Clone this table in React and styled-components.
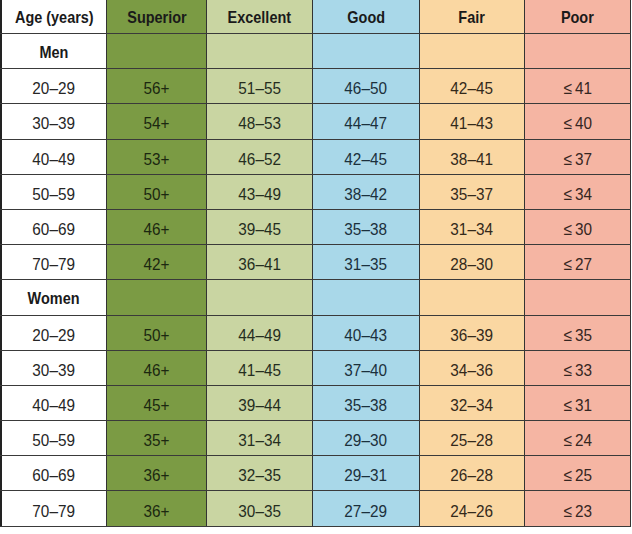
import React from "react";
import styled, { createGlobalStyle } from "styled-components";

const Global = createGlobalStyle`
  html, body { margin: 0; padding: 0; background: #ffffff; }
  body { font-family: "Liberation Sans", Arial, sans-serif; }
`;

const COLORS = ["#ffffff", "#7b9b44", "#c9d5a2", "#a9d8e9", "#fad7a2", "#f5b5a3"];
const TEXT = ["#262626", "#1b2810", "#252d1e", "#1b303c", "#33291a", "#352622"];

const Table = styled.div`
  width: 631px;
  display: flex;
  flex-direction: column;
  box-shadow: 0 3px 0 -1px #e4e4e4;
`;

const Row = styled.div`
  display: grid;
  grid-template-columns: 107px 100px 106px 107px 105px 106px;
  height: ${(p) => (p.$header ? "34px" : "35.2px")};
  box-sizing: border-box;
  border-bottom: 1px solid #3a3a3a;
`;

const Cell = styled.div`
  box-sizing: border-box;
  display: flex;
  align-items: center;
  justify-content: center;
  background: ${(p) => COLORS[p.$col]};
  color: ${(p) => (p.$bold ? "#1a1a1a" : TEXT[p.$col])};
  border-right: 1px solid #333333;
  border-left: ${(p) => (p.$col === 0 ? "2px solid #222222" : "none")};
  padding-top: ${(p) => (p.$header ? "1px" : p.$bold ? "2px" : "5px")};
  white-space: nowrap;
`;

const Label = styled.span`
  display: inline-block;
  font-size: 17px;
  font-weight: ${(p) => (p.$bold ? 700 : 400)};
  transform: scaleX(${(p) => (p.$bold ? 0.85 : 0.9)});
  line-height: 1;
`;

const headers = ["Age (years)", "Superior", "Excellent", "Good", "Fair", "Poor"];

const men = [
  ["20–29", "56+", "51–55", "46–50", "42–45", "≤\u200941"],
  ["30–39", "54+", "48–53", "44–47", "41–43", "≤\u200940"],
  ["40–49", "53+", "46–52", "42–45", "38–41", "≤\u200937"],
  ["50–59", "50+", "43–49", "38–42", "35–37", "≤\u200934"],
  ["60–69", "46+", "39–45", "35–38", "31–34", "≤\u200930"],
  ["70–79", "42+", "36–41", "31–35", "28–30", "≤\u200927"],
];

const women = [
  ["20–29", "50+", "44–49", "40–43", "36–39", "≤\u200935"],
  ["30–39", "46+", "41–45", "37–40", "34–36", "≤\u200933"],
  ["40–49", "45+", "39–44", "35–38", "32–34", "≤\u200931"],
  ["50–59", "35+", "31–34", "29–30", "25–28", "≤\u200924"],
  ["60–69", "36+", "32–35", "29–31", "26–28", "≤\u200925"],
  ["70–79", "36+", "30–35", "27–29", "24–26", "≤\u200923"],
];

function GroupRow({ label }) {
  return (
    <Row>
      {COLORS.map((_, i) => (
        <Cell key={i} $col={i} $bold>
          {i === 0 ? <Label $bold>{label}</Label> : null}
        </Cell>
      ))}
    </Row>
  );
}

function DataRow({ values }) {
  return (
    <Row>
      {values.map((v, i) => (
        <Cell key={i} $col={i}>
          <Label>{v}</Label>
        </Cell>
      ))}
    </Row>
  );
}

export default function App() {
  return (
    <>
      <Global />
      <Table>
        <Row $header>
          {headers.map((h, i) => (
            <Cell key={i} $col={i} $bold $header>
              <Label $bold>{h}</Label>
            </Cell>
          ))}
        </Row>
        <GroupRow label="Men" />
        {men.map((r, i) => (
          <DataRow key={"m" + i} values={r} />
        ))}
        <GroupRow label="Women" />
        {women.map((r, i) => (
          <DataRow key={"w" + i} values={r} />
        ))}
      </Table>
    </>
  );
}
